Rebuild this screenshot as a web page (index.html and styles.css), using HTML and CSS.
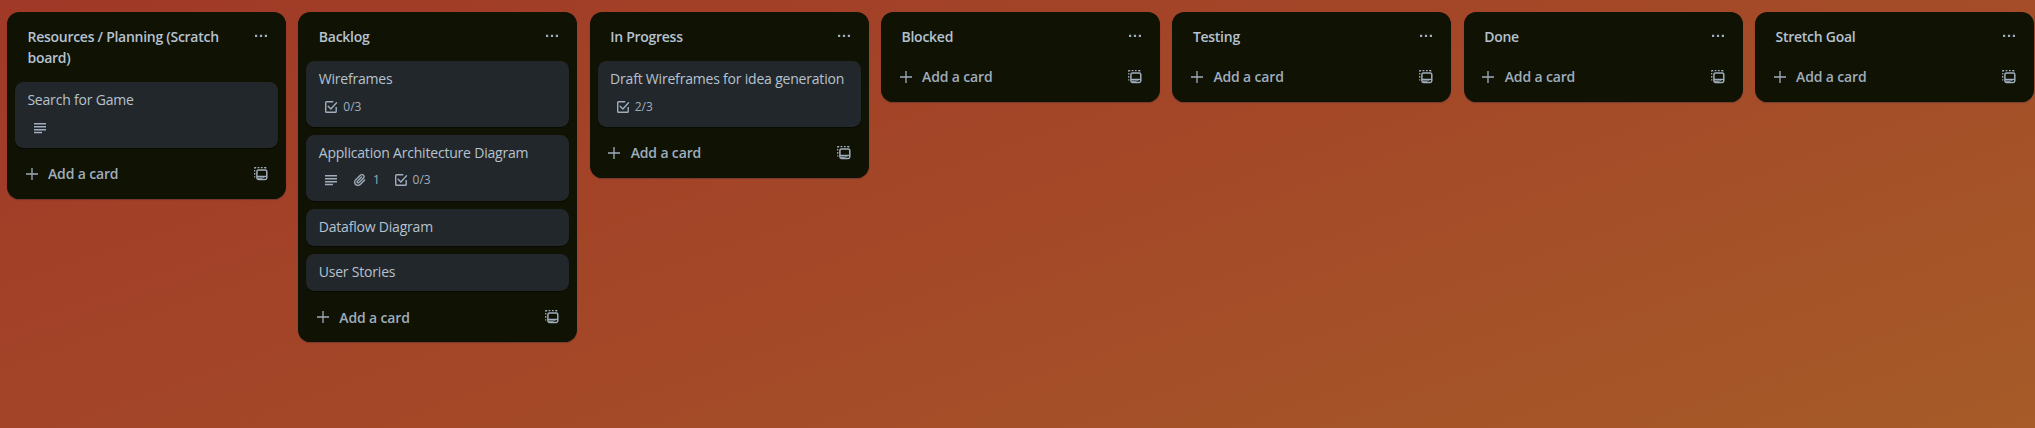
FILE: index.html
```
<!DOCTYPE html>
<html lang="en">
<head>
<meta charset="utf-8">
<title>Board</title>
<link rel="stylesheet" href="styles.css">
</head>
<body>
<svg class="defs" aria-hidden="true">
  <symbol id="more" viewBox="0 0 16 16"><path fill="currentColor" d="M2 6.8h2.2v2.2H2zM6.9 6.8h2.2v2.2H6.9zM11.8 6.8H14v2.2h-2.2z"/></symbol>
  <symbol id="plus" viewBox="0 0 14 14"><path d="M7 1v12M1 7h12" stroke="currentColor" stroke-width="1.3" fill="none"/></symbol>
  <symbol id="template" viewBox="0 0 14 14"><g fill="none" stroke="currentColor"><rect x="2.9" y="3" width="9.9" height="9.4" rx="1.6" stroke-width="1.5"/><path d="M3 9.4h9.6" stroke-width="1.3"/><path d="M.7 10.6V9.2M.7 7.7V6M.7 4.5V3M.8 1.7V.7h1.4M3.6.7h1.8M6.9.7h1.8M10.1.7h1.6v.9" stroke-width="1.2"/></g><path d="M3.5 10.6h5v1.2h-5zM8.6 9.5h1.8v1.2H8.6z" fill="currentColor"/></symbol>
  <symbol id="lines" viewBox="0 0 14 14"><path d="M1 2.7h12M1 5.7h12M1 8.7h12M1 11.5h8" stroke="currentColor" stroke-width="1.5" fill="none"/></symbol>
  <symbol id="check" viewBox="0 0 14 14"><g fill="none" stroke="currentColor" stroke-width="1.4"><path d="M9.3 1.8H2.6a.9.9 0 0 0-.9.9v8.7c0 .5.4.9.9.9h8.7c.5 0 .9-.4.9-.9V7.1"/><path d="M4.2 6.3l2.7 2.7 5.6-6.2" stroke-linecap="round"/></g></symbol>
  <symbol id="clip" viewBox="0 0 24 24"><path fill="currentColor" stroke="currentColor" stroke-width=".2" fill-rule="evenodd" d="M11.6426 17.9647C10.1123 19.46 7.62736 19.4606 6.10092 17.9691C4.57505 16.478 4.57769 14.0467 6.10253 12.5566L13.2505 5.57184C14.1476 4.6952 15.5861 4.69251 16.4832 5.56921C17.3763 6.44184 17.3778 7.85135 16.4869 8.72199L9.78361 15.2722C9.53288 15.5172 9.12807 15.5163 8.86954 15.2636C8.61073 15.0107 8.60963 14.6158 8.86954 14.3618L15.0989 8.27463C15.4812 7.90109 15.4812 7.29546 15.0989 6.92192C14.7167 6.54838 14.0969 6.54838 13.7146 6.92192L7.48523 13.0091C6.45911 14.0118 6.46356 15.618 7.48523 16.6163C8.50674 17.6145 10.1511 17.6186 11.1679 16.6249L17.8712 10.0747C19.5274 8.45632 19.5244 5.83555 17.8676 4.2165C16.2047 2.59156 13.5266 2.59657 11.8662 4.21913L4.71822 11.2039C2.42951 13.4404 2.42555 17.083 4.71661 19.3218C7.00774 21.5606 10.7323 21.5597 13.0269 19.3174L19.7133 12.7837C20.0956 12.4101 20.0956 11.8045 19.7133 11.4309C19.331 11.0574 18.7113 11.0574 18.329 11.4309L11.6426 17.9647Z"/></symbol>
</svg>
<main class="board">
  <section class="list">
    <header class="head"><h2 class="title">Resources / Planning (Scratch board)</h2><svg class="more"><use href="#more"/></svg></header>
    <div class="cards">
      <article class="card"><p class="name">Search for Game</p><div class="badges"><span class="badge"><svg><use href="#lines"/></svg></span></div></article>
    </div>
    <footer class="foot"><svg class="plus"><use href="#plus"/></svg><span class="add">Add a card</span><svg class="template"><use href="#template"/></svg></footer>
  </section>
  <section class="list">
    <header class="head"><h2 class="title">Backlog</h2><svg class="more"><use href="#more"/></svg></header>
    <div class="cards">
      <article class="card"><p class="name">Wireframes</p><div class="badges"><span class="badge"><svg><use href="#check"/></svg>0/3</span></div></article>
      <article class="card"><p class="name">Application Architecture Diagram</p><div class="badges"><span class="badge"><svg><use href="#lines"/></svg></span><span class="badge"><svg class="clip"><use href="#clip"/></svg>1</span><span class="badge"><svg><use href="#check"/></svg>0/3</span></div></article>
      <article class="card"><p class="name">Dataflow Diagram</p></article>
      <article class="card"><p class="name">User Stories</p></article>
    </div>
    <footer class="foot"><svg class="plus"><use href="#plus"/></svg><span class="add">Add a card</span><svg class="template"><use href="#template"/></svg></footer>
  </section>
  <section class="list">
    <header class="head"><h2 class="title">In Progress</h2><svg class="more"><use href="#more"/></svg></header>
    <div class="cards">
      <article class="card"><p class="name">Draft Wireframes for idea generation</p><div class="badges"><span class="badge"><svg><use href="#check"/></svg>2/3</span></div></article>
    </div>
    <footer class="foot"><svg class="plus"><use href="#plus"/></svg><span class="add">Add a card</span><svg class="template"><use href="#template"/></svg></footer>
  </section>
  <section class="list">
    <header class="head"><h2 class="title">Blocked</h2><svg class="more"><use href="#more"/></svg></header>
    <footer class="foot"><svg class="plus"><use href="#plus"/></svg><span class="add">Add a card</span><svg class="template"><use href="#template"/></svg></footer>
  </section>
  <section class="list">
    <header class="head"><h2 class="title">Testing</h2><svg class="more"><use href="#more"/></svg></header>
    <footer class="foot"><svg class="plus"><use href="#plus"/></svg><span class="add">Add a card</span><svg class="template"><use href="#template"/></svg></footer>
  </section>
  <section class="list">
    <header class="head"><h2 class="title">Done</h2><svg class="more"><use href="#more"/></svg></header>
    <footer class="foot"><svg class="plus"><use href="#plus"/></svg><span class="add">Add a card</span><svg class="template"><use href="#template"/></svg></footer>
  </section>
  <section class="list">
    <header class="head"><h2 class="title">Stretch Goal</h2><svg class="more"><use href="#more"/></svg></header>
    <footer class="foot"><svg class="plus"><use href="#plus"/></svg><span class="add">Add a card</span><svg class="template"><use href="#template"/></svg></footer>
  </section>
</main>
</body>
</html>
```
FILE: styles.css
```
* { box-sizing: border-box; }
body {
  margin: 0;
  height: 428px;
  overflow: hidden;
  background: linear-gradient(160deg, #a03927 0%, #a44828 50%, #a65b28 100%);
  font-family: "Segoe UI", "Open Sans", "Noto Sans", sans-serif;
  font-size: 14px;
  line-height: 21px;
  color: #b6c2cf;
}
.defs { display: none; }
.board {
  display: flex;
  align-items: flex-start;
  gap: 12.35px;
  padding: 12px 0 0 7px;
}
.list {
  flex: none;
  width: 279px;
  border-radius: 12.3px;
  background: #101204;
  box-shadow: 0 1px 1px rgba(9, 30, 66, .3);
}
.head {
  display: flex;
  justify-content: space-between;
  align-items: flex-start;
  padding: 13.6px 17px 14.4px 20.5px;
}
.title {
  margin: 0;
  width: 205px;
  font-size: 14px;
  font-weight: 650;
  line-height: 21px;
  letter-spacing: -.27px;
}
.more { width: 16px; height: 16px; margin-top: 2.6px; color: #9fadbc; }
.cards {
  display: flex;
  flex-direction: column;
  gap: 8.2px;
  padding: 0 8px 10.3px;
}
.card {
  padding: 7.4px 12px 8.6px 12.4px;
  border-radius: 8.2px;
  background: #22272b;
  box-shadow: 0 1px 1px rgba(3, 4, 4, .5);
}
.name { margin: 0; white-space: nowrap; font-weight: 430; letter-spacing: -.2px; }
.badges {
  display: flex;
  gap: 9.7px;
  height: 28.7px;
  padding: 7.2px 0 0 5.6px;
}
.badge {
  display: flex;
  align-items: center;
  gap: 5px;
  height: 20px;
  padding-right: 4px;
  font-size: 12px;
  line-height: 20px;
  color: #9fadbc;
}
.badge svg { width: 14px; height: 14px; }
.badge .clip { width: 16px; height: 16px; }
.foot {
  display: flex;
  align-items: center;
  height: 41px;
  padding: 0 18px 9px 17.5px;
  color: #9fadbc;
}
.plus { width: 14px; height: 14px; }
.add { flex: 1; margin-left: 9.5px; font-weight: 650; letter-spacing: -.15px; }
.template { width: 14px; height: 14px; }
```
